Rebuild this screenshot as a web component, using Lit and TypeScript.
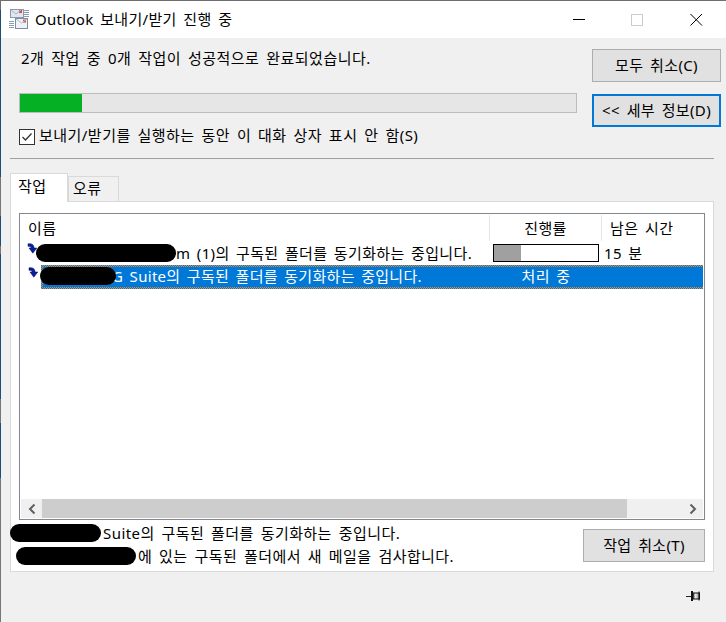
import { LitElement, html, css } from "lit";
import { customElement } from "lit/decorators.js";

const arrow = html`<svg class="arrow" width="11" height="11" viewBox="0 0 11 11"><path d="M1 0.800 C4 0.200 6.600 1.200 7 4 L7 5 L9.800 5 L5.800 10.200 L2 5 L4.200 5 C4.200 3.800 2.600 3.200 1 3.400 Z" fill="#0a1f9a" stroke="#00105e" stroke-width=".5"/></svg>`;

@customElement("app-root")
export class AppRoot extends LitElement {
  static styles = css`
    :host { display: block; width: 726px; height: 622px; overflow: hidden; font-family: "Noto Sans", "Noto Sans CJK KR", sans-serif; font-size: 15px; line-height: 20px; letter-spacing: .35px; word-spacing: 2.5px; color: #000; }
    .win { box-sizing: border-box; width: 726px; height: 622px; display: flex; flex-direction: column; border-top: 1px solid #6f6f6f; background: linear-gradient(#6f6f6f 0 9px, #1a5078 9px 176px, #77777a 176px 215px, #1a5078 215px 245px, #77777a 245px 253px, #1a5078 253px 398px, #777 398px 422px, #1a5078 422px 477px, #777 477px); }
    .body { flex: 1; display: flex; flex-direction: column; margin-left: 1px; background: #f0f0f0; }
    .title { height: 37px; flex: none; margin-left: 1px; background: #fff; display: flex; align-items: center; padding-left: 8px; }
    .title .app { margin-right: 5px; }
    .title span { flex: 1; white-space: pre; padding-bottom: 1px; letter-spacing: .3px; }
    .ctl { display: flex; align-items: center; padding-right: 23px; }
    .ctl svg { display: block; }
    .top { display: flex; height: 120px; flex: none; }
    .left { width: 558px; margin-left: 18px; display: flex; flex-direction: column; }
    .msg { margin: 10px 0 0 2px; height: 20px; white-space: pre; letter-spacing: .49px; }
    .bar { box-sizing: border-box; height: 20px; margin-top: 25px; background: #e6e6e6; border: 1px solid #bcbcbc; }
    .fill { height: 100%; width: 62px; background: #06b025; }
    .chk { display: flex; align-items: center; gap: 4px; margin-top: 12px; white-space: pre; letter-spacing: .47px; }
    .chk span { padding-bottom: 3px; }
    .box { box-sizing: border-box; width: 16px; height: 16px; border: 1px solid #333; background: #fff; display: block; flex: none; }
    .btns { margin-left: 15px; padding-top: 11px; display: flex; flex-direction: column; gap: 12px; }
    .btn { box-sizing: border-box; display: flex; align-items: center; justify-content: center; width: 129px; height: 33px; padding-bottom: 2px; background: #e1e1e1; border: 1px solid #adadad; white-space: pre; }
    .btn.focus { border: 2px solid #0078d7; }
    .sep { height: 1px; flex: none; background: #a0a0a0; margin-left: 9px; width: 704px; }
    .tabs { display: flex; align-items: flex-end; margin: 14px 0 0 9px; height: 28px; flex: none; position: relative; z-index: 1; }
    .tab { box-sizing: border-box; display: flex; padding-left: 4px; background: #f0f0f0; border: 1px solid #d9d9d9; border-bottom: 0; height: 25px; width: 51px; padding-top: 1px; white-space: pre; }
    .tab.on { background: #fff; width: 58px; padding: 2px 0 0 7px; margin-bottom: -1px; height: 29px; }
    .panel { box-sizing: border-box; width: 704px; height: 371px; margin-left: 9px; flex: none; background: #fff; border: 1px solid #d9d9d9; padding: 11px 0 0 8px; display: flex; flex-direction: column; }
    .list { box-sizing: border-box; width: 686px; height: 307px; flex: none; border: 1px solid #828790; display: flex; flex-direction: column; background: #fff; padding: 0 1px 1px 1px; }
    .head { display: grid; grid-template-columns: 469px 112px 102px; height: 27px; flex: none; }
    .hc { border-right: 1px solid #e5e5e5; display: flex; align-items: center; white-space: pre; box-sizing: border-box; margin-top: 1px; }
    .hc:first-child { padding-left: 7px; }
    .hc:nth-child(2) { justify-content: center; }
    .hc:last-child { border: 0; padding-left: 8px; }
    .row { display: grid; grid-template-columns: 469px 112px 101px; white-space: pre; word-spacing: 2.2px; }
    .r1 { height: 18px; margin-top: 3px; line-height: 19px; }
    .r2 { height: 24px; margin-top: 3px; line-height: 22px; position: relative; }
    .name { display: flex; }
    .r1 .name { padding-left: 6px; }
    .arrow { display: block; flex: none; margin-top: -1px; margin-right: -2px; position: relative; z-index: 1; }
    .pill { display: block; flex: none; background: #000; border-radius: 9px; height: 18px; position: relative; z-index: 1; }
    .r1 .pill { width: 140px; }
    .sel { position: absolute; z-index: 0; left: 20px; top: 0; right: 0; bottom: 0; box-sizing: border-box;
      --ck: conic-gradient(#e8862a 25%, #0078d7 0 50%, #e8862a 0 75%, #0078d7 0);
      background: var(--ck) 0 0 / 2px 2px repeat-x, var(--ck) 0 100% / 2px 2px repeat-x, var(--ck) 0 0 / 2px 2px repeat-y, #0078d7; }
    .r2 .name { padding-left: 7px; position: relative; z-index: 1; color: #fff; }
    .r2 .pill { width: 76px; margin-top: 2px; margin-left: 1px; }
    .r2 .arrow { margin-top: 2px; margin-right: 0; }
    .r2 .name span { margin-left: -4px; letter-spacing: .3px; }
    .prog { margin-left: 3px; box-sizing: border-box; width: 106px; height: 18px; border: 1px solid #000; background: #fff; }
    .prog div { width: 27px; height: 100%; background: #a0a0a0; }
    .r1 .time { padding-left: 2px; }
    .r2 .c { position: relative; z-index: 1; color: #fff; text-align: center; }
    .spacer { flex: 1; }
    .sb { height: 19px; flex: none; display: flex; background: #f0f0f0; width: 682px; }
    .sb .a { width: 21px; display: flex; align-items: center; justify-content: center; flex: none; }
    .sb .t { width: 585px; background: #cdcdcd; flex: none; }
    .sb .g { flex: 1; }
    .foot { display: flex; padding-top: 1px; }
    .ftext { width: 572px; margin-left: -9px; flex: none; display: flex; flex-direction: column; white-space: pre; letter-spacing: .44px; }
    .fl { display: flex; height: 23px; align-items: center; }
    .fl .pill { margin-right: 2px; }
    .f1 .pill { width: 91px; }
    .f2 .pill { width: 120px; margin-left: 6px; }
    .foot .btn { width: 122px; margin-top: 8px; margin-left: 1px; }
    .pinrow { display: flex; justify-content: flex-end; padding: 19px 26px 0 0; }
  `;

  render() {
    return html`<div class="win">
      <div class="title">
        <svg class="app" width="21" height="21" viewBox="0 0 21 21">
          <rect x="1.500" y="0.500" width="13" height="8" fill="#dfe6f0" stroke="#8c9aac"/>
          <rect x="10" y="1" width="3" height="3" fill="#e24a3b"/>
          <path d="M2 1l5 4 5-4" fill="none" stroke="#a9b6c6"/>
          <path d="M15 1.500h5M15 3.500h5M15 5.500h5M15 7.500h5M0 12.500h5M0 14.500h5M0 16.500h5M0 18.500h5" stroke="#8b9bb0"/>
          <rect x="6.500" y="9.500" width="12" height="10" fill="#eef2f7" stroke="#7d8ea3"/>
          <rect x="14" y="10.500" width="3" height="3" fill="#e24a3b"/>
          <path d="M7 10l5.500 4 5.500-4" fill="none" stroke="#b4c0cf"/>
        </svg>
        <span>Outlook 보내기/받기 진행 중</span>
        <div class="ctl">
          <svg width="130" height="14" viewBox="0 0 130 14">
            <path d="M0 6.500h12" stroke="#000"/>
            <rect x="58.500" y="1.500" width="11" height="11" fill="none" stroke="#ccc"/>
            <path d="M117.500 1l11.500 11.500M129 1l-11.500 11.500" stroke="#000" fill="none"/>
          </svg>
        </div>
      </div>
      <div class="body">
        <div class="top">
          <div class="left">
            <div class="msg">2개 작업 중 0개 작업이 성공적으로 완료되었습니다.</div>
            <div class="bar"><div class="fill"></div></div>
            <div class="chk">
              <svg class="box" viewBox="0 0 14 14"><path d="M2.500 7l3 3 6-6.500" fill="none" stroke="#333" stroke-width="1.300"/></svg>
              <span>보내기/받기를 실행하는 동안 이 대화 상자 표시 안 함(S)</span>
            </div>
          </div>
          <div class="btns">
            <div class="btn">모두 취소(C)</div>
            <div class="btn focus">&lt;&lt; 세부 정보(D)</div>
          </div>
        </div>
        <div class="sep"></div>
        <div class="tabs"><div class="tab on">작업</div><div class="tab">오류</div></div>
        <div class="panel">
          <div class="list">
            <div class="head"><div class="hc">이름</div><div class="hc">진행률</div><div class="hc">남은 시간</div></div>
            <div class="row r1">
              <div class="name">${arrow}<i class="pill"></i><span>m (1)의 구독된 폴더를 동기화하는 중입니다.</span></div>
              <div><div class="prog"><div></div></div></div>
              <div class="time">15 분</div>
            </div>
            <div class="row r2">
              <div class="sel"></div>
              <div class="name">${arrow}<i class="pill"></i><span>G Suite의 구독된 폴더를 동기화하는 중입니다.</span></div>
              <div class="c">처리 중</div>
              <div></div>
            </div>
            <div class="spacer"></div>
            <div class="sb">
              <div class="a"><svg width="8" height="12" viewBox="0 0 8 12"><path d="M6.500 1.500L2 6l4.500 4.500" fill="none" stroke="#606060" stroke-width="2"/></svg></div>
              <div class="t"></div>
              <div class="g"></div>
              <div class="a"><svg width="8" height="12" viewBox="0 0 8 12"><path d="M1.500 1.500L6 6l-4.500 4.500" fill="none" stroke="#606060" stroke-width="2"/></svg></div>
            </div>
          </div>
          <div class="foot">
            <div class="ftext">
              <div class="fl f1"><i class="pill"></i><span>Suite의 구독된 폴더를 동기화하는 중입니다.</span></div>
              <div class="fl f2"><i class="pill"></i><span>에 있는 구독된 폴더에서 새 메일을 검사합니다.</span></div>
            </div>
            <div class="btn">작업 취소(T)</div>
          </div>
        </div>
        <div class="pinrow">
          <svg width="14" height="10" viewBox="0 0 14 10">
            <defs><linearGradient id="pg" x1="0" x2="1"><stop offset="0" stop-color="#555"/><stop offset=".4" stop-color="#eee"/><stop offset="1" stop-color="#777"/></linearGradient></defs>
            <path d="M0 5.500h5" stroke="#222"/><rect x="5" y="0" width="2" height="10" fill="#111"/><rect x="7" y="2" width="6.500" height="6" fill="url(#pg)" stroke="#111"/><path d="M13 0.500v9" stroke="#111"/>
          </svg>
        </div>
      </div>
    </div>`;
  }
}
